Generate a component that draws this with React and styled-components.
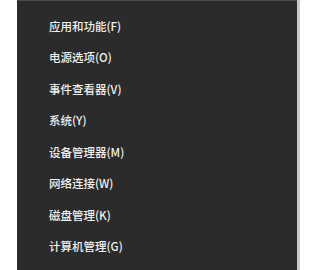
import React from "react";
import styled, { createGlobalStyle } from "styled-components";

const items = [
  "应用和功能(F)",
  "电源选项(O)",
  "事件查看器(V)",
  "系统(Y)",
  "设备管理器(M)",
  "网络连接(W)",
  "磁盘管理(K)",
  "计算机管理(G)",
];

const GlobalStyle = createGlobalStyle`
  html, body {
    margin: 0;
    padding: 0;
    background: #ffffff;
    overflow: hidden;
  }
`;

const Screen = styled.div`
  display: flex;
  width: 300px;
  height: 270px;
  overflow: hidden;
`;

const Gutter = styled.div`
  width: 17px;
  flex-shrink: 0;
  background: #ffffff;
`;

const Menu = styled.ul`
  list-style: none;
  margin: 0;
  width: 280px;
  flex-shrink: 0;
  padding: 9px 0 0;
  background: #2b2b2b;
  border-top: 1px solid #4a4a4a;
  box-sizing: border-box;
`;

const Item = styled.li`
  height: 31.5px;
  display: flex;
  align-items: center;
  padding-left: 32px;
  color: #f0f0f0;
  font-family: "Microsoft YaHei", "Noto Sans CJK SC", sans-serif;
  font-size: 11.5px;
  font-weight: 500;
  white-space: nowrap;
`;

const Edge = styled.div`
  width: 3px;
  flex-shrink: 0;
  background: #c6c9cc;
`;

export default function App() {
  return (
    <>
      <GlobalStyle />
      <Screen>
        <Gutter />
        <Menu>
          {items.map((label) => (
            <Item key={label}>{label}</Item>
          ))}
        </Menu>
        <Edge />
      </Screen>
    </>
  );
}
